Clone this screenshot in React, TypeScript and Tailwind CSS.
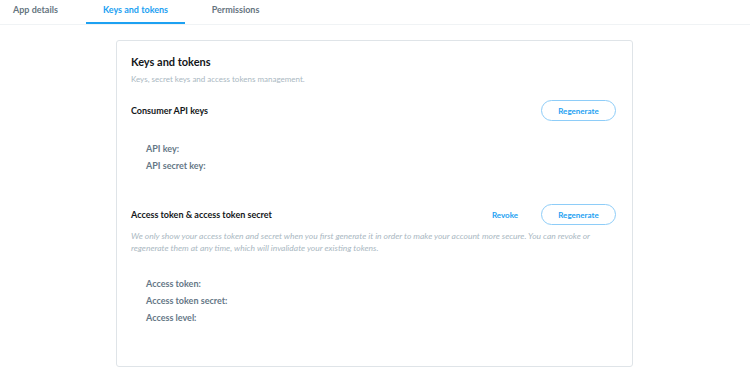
import React from 'react';

const font = { fontFamily: 'Lato, "Noto Sans", sans-serif' };

const Tab = ({ label, active }: { label: string; active?: boolean }) => (
  <div
    className={`flex h-[24px] justify-center pt-[3px] text-[9px] font-bold ${
      active ? 'border-b-2 border-[#1da1f2] text-[#1da1f2]' : 'text-[#66757f]'
    }`}
  >
    {label}
  </div>
);

const OutlineButton = ({ children }: { children: React.ReactNode }) => (
  <button className="h-[21px] w-[75px] rounded-full border border-[#8ecdf8] text-[8px] font-bold text-[#1da1f2]">
    {children}
  </button>
);

const Field = ({ label }: { label: string }) => (
  <div className="h-[17px] text-[9px] font-bold leading-[17px] text-[#657786]">{label}</div>
);

export default function App() {
  return (
    <div className="min-h-screen w-[750px] bg-white" style={font}>
      <div className="flex h-[25px] border-b border-[#f0f3f5]">
        <div className="w-[86px] pl-[13px]">
          <div className="flex h-[24px] pt-[3px] text-[9px] font-bold text-[#66757f]">App details</div>
        </div>
        <div className="w-[99px]">
          <Tab label="Keys and tokens" active />
        </div>
        <div className="w-[101px]">
          <Tab label="Permissions" />
        </div>
      </div>

      <div className="ml-[116px] mt-[15px] h-[327px] w-[517px] rounded-[3px] border border-[#dfe4e8] pl-[14px] pr-[16px] pt-[14px]">
        <div className="text-[11px] font-bold leading-[14px] text-[#14171a]">Keys and tokens</div>
        <div className="mt-[5px] text-[8px] leading-[11px] text-[#aab8c2]">
          Keys, secret keys and access tokens management.
        </div>

        <div className="mt-[15px] flex items-center justify-between">
          <div className="text-[9px] font-bold text-[#14171a]">Consumer API keys</div>
          <OutlineButton>Regenerate</OutlineButton>
        </div>

        <div className="mt-[19px] pl-[15px]">
          <Field label="API key:" />
          <Field label="API secret key:" />
        </div>

        <div className="mt-[30px] flex items-center justify-between">
          <div className="text-[9px] font-bold text-[#14171a]">Access token &amp; access token secret</div>
          <div className="flex items-center gap-[23px]">
            <span className="text-[8px] font-bold text-[#1da1f2]">Revoke</span>
            <OutlineButton>Regenerate</OutlineButton>
          </div>
        </div>

        <p className="mt-[5px] text-[8.5px] italic leading-[12px] text-[#aab8c2]">
          We only show your access token and secret when you first generate it in order to make your account more
          secure. You can revoke or regenerate them at any time, which will invalidate your existing tokens.
        </p>

        <div className="mt-[21px] pl-[15px]">
          <Field label="Access token:" />
          <Field label="Access token secret:" />
          <Field label="Access level:" />
        </div>
      </div>
    </div>
  );
}
